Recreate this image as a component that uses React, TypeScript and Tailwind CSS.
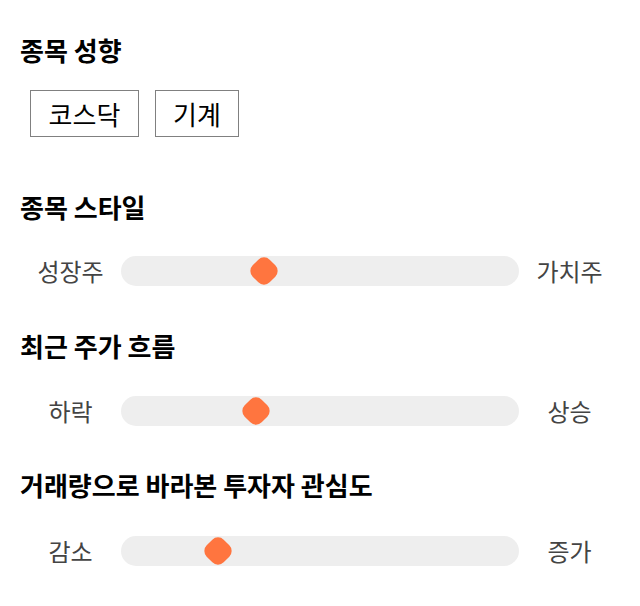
const sliders = [
  { title: "종목 스타일", left: "성장주", right: "가치주", pos: 36, gap: "mt-[55px]", inner: "mt-[34px]" },
  { title: "최근 주가 흐름", left: "하락", right: "상승", pos: 33.8, gap: "mt-[45px]", inner: "mt-[35px]" },
  { title: "거래량으로 바라본 투자자 관심도", left: "감소", right: "증가", pos: 24.4, gap: "mt-[44px]", inner: "mt-[36px]" },
];

function Slider({ left, right, pos }: { left: string; right: string; pos: number }) {
  return (
    <div className="flex h-[30px] items-center">
      <span className="w-[101px] text-center text-[24px] text-[#444]">{left}</span>
      <div className="relative h-[30px] flex-1 rounded-full bg-[#eeeeee]">
        <div
          className="absolute top-1/2 h-[24px] w-[24px] -translate-x-1/2 -translate-y-1/2 rotate-45 rounded-[8px] bg-[#ff753f]"
          style={{ left: `${pos}%` }}
        />
      </div>
      <span className="w-[101px] text-center text-[24px] text-[#444]">{right}</span>
    </div>
  );
}

export default function App() {
  return (
    <div
      className="min-h-[606px] bg-white px-5 pt-[35px] text-black"
      style={{ fontFamily: '"Noto Sans CJK KR", "Noto Sans", sans-serif' }}
    >
      <h2 className="text-[26px] font-bold leading-[30px]">종목 성향</h2>
      <div className="ml-[10px] mt-[25px] flex gap-4">
        <span className="flex h-[47px] w-[109px] items-center justify-center border border-[#808080] text-[26px]">
          코스닥
        </span>
        <span className="flex h-[47px] w-[84px] items-center justify-center border border-[#808080] text-[26px]">
          기계
        </span>
      </div>

      {sliders.map((s) => (
        <div key={s.title} className={s.gap}>
          <h2 className="text-[26px] font-bold leading-[30px]">{s.title}</h2>
          <div className={s.inner}>
            <Slider left={s.left} right={s.right} pos={s.pos} />
          </div>
        </div>
      ))}
    </div>
  );
}
